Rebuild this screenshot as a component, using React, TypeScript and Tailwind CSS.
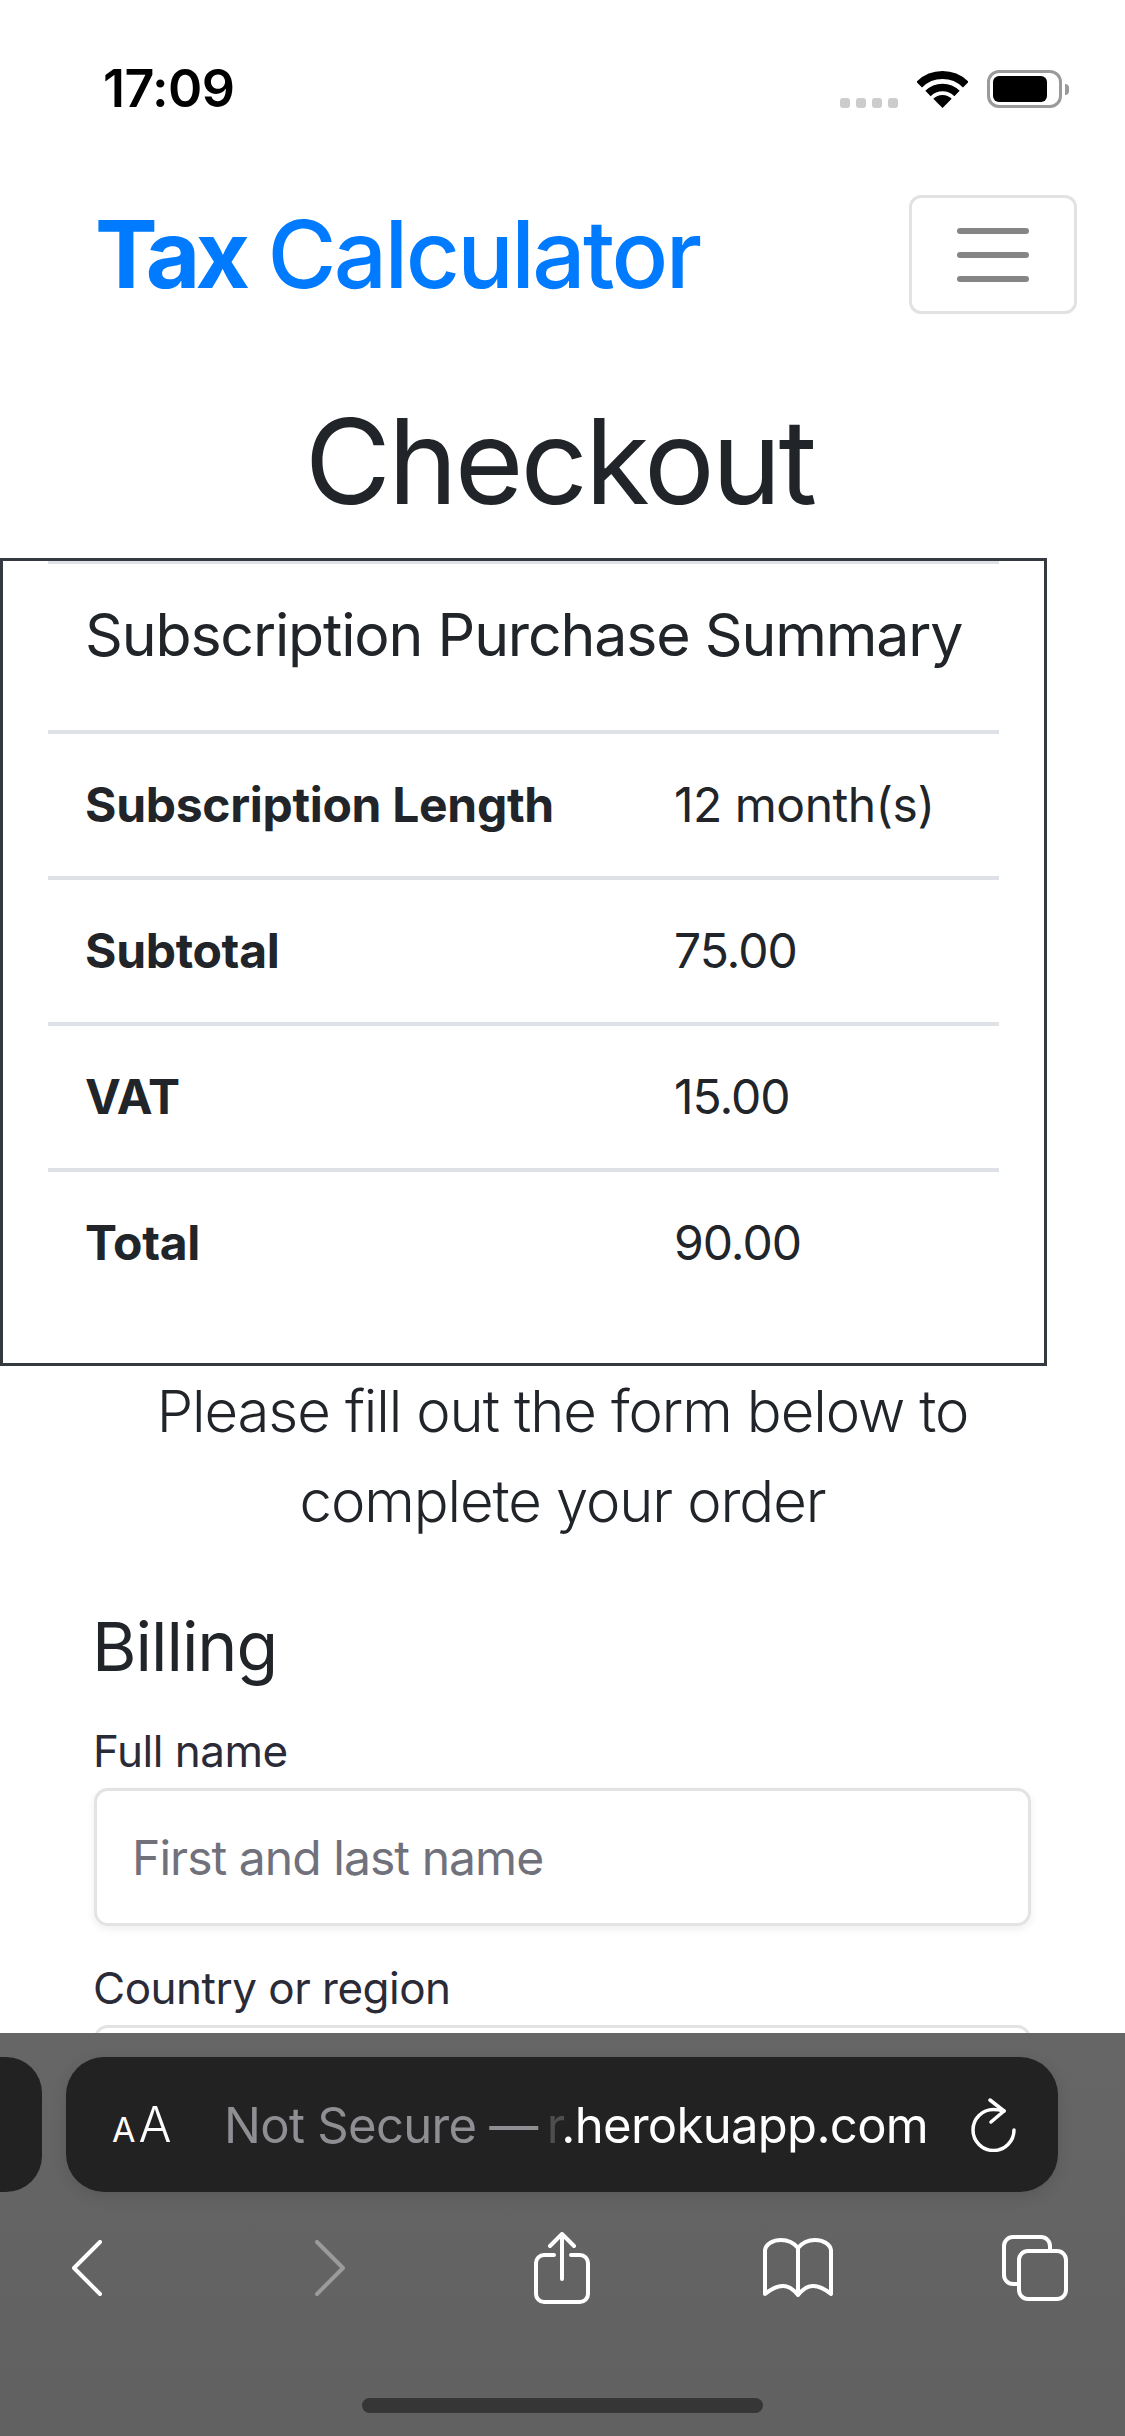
const Wifi = () => (
  <svg width="51" height="37" viewBox="0 0 51 37">
    <path d="M2.2 13.7A33 33 0 0 1 48.8 13.7" fill="none" stroke="#000" strokeWidth="8" />
    <path d="M11 22.5A20.5 20.5 0 0 1 40 22.5" fill="none" stroke="#000" strokeWidth="7.5" />
    <path d="M16.3 27.8A13 13 0 0 1 34.7 27.8L25.5 37Z" fill="#000" />
  </svg>
);

const ShareIcon = () => (
  <svg width="56" height="72" viewBox="0 0 56 72" fill="none" stroke="#fff" strokeWidth="4" strokeLinecap="round" strokeLinejoin="round">
    <path d="M20 23H10a8 8 0 0 0-8 8v31a8 8 0 0 0 8 8h36a8 8 0 0 0 8-8V31a8 8 0 0 0-8-8h-9" />
    <path d="M28 47V2M16 14 28 2 40 14" />
  </svg>
);

const BookIcon = () => (
  <svg width="70" height="60" viewBox="0 0 70 60" fill="none" stroke="#fff" strokeWidth="4" strokeLinejoin="round">
    <path d="M35 10C31 5 25 2 18 2 10 2 3 6 2 12V56C8 51 14 48 20 48 26 48 31 52 35 57 39 52 44 48 50 48 56 48 62 51 68 56V12C67 6 60 2 52 2 45 2 39 5 35 10V57" />
  </svg>
);

const TabsIcon = () => (
  <svg width="66" height="66" viewBox="0 0 66 66" fill="none" stroke="#fff" strokeWidth="4">
    <path d="M15 49H11a9 9 0 0 1-9-9V11a9 9 0 0 1 9-9h28a9 9 0 0 1 9 9v3" />
    <rect x="17" y="16" width="47" height="48" rx="9" />
  </svg>
);

const ReloadIcon = () => (
  <svg width="46" height="54" viewBox="0 0 46 54" fill="none" stroke="#fff" strokeWidth="3.5" strokeLinecap="round" strokeLinejoin="round">
    <path d="M33 13C29 12 26 11.5 22.5 11.5A20.5 20.5 0 1 0 43 32" />
    <path d="M19 2 33 13 20 24" />
  </svg>
);

const Row = ({ label, value, wide }: { label: string; value: string; wide?: boolean }) => (
  <div className="flex h-[146px] items-center border-t-[4px] border-[#dee2e6]">
    <div className="w-[626px] pl-[37px] text-[48px] font-bold tracking-[-0.3px]">{label}</div>
    <div className={wide ? 'text-[48px] tracking-[-0.5px]' : 'text-[48px] tracking-[-1px]'}>{value}</div>
  </div>
);

export default function App() {
  return (
    <div className="flex h-[2436px] w-[1125px] flex-col overflow-hidden bg-white font-['Inter',sans-serif] text-[#212529]">
      <div className="flex-1 overflow-hidden">
        {/* Status bar */}
        <div className="flex h-[178px] items-center justify-between pl-[103px] pr-[56px]">
          <span className="text-[52px] font-semibold tracking-[-0.6px] text-black">17:09</span>
          <div className="flex items-end gap-[19px]">
            <div className="flex gap-[6px]">
              <div className="h-[10px] w-[10px] rounded-[3px] bg-[#cccccc]" />
              <div className="h-[10px] w-[10px] rounded-[3px] bg-[#cccccc]" />
              <div className="h-[10px] w-[10px] rounded-[3px] bg-[#cccccc]" />
              <div className="h-[10px] w-[10px] rounded-[3px] bg-[#cccccc]" />
            </div>
            <Wifi />
            <div className="flex items-center gap-[3px]">
              <div className="h-[38px] w-[75px] rounded-[12px] border-[3px] border-[#9a9a9a] p-[3px] pr-[12px]">
                <div className="h-full w-full rounded-[6px] bg-black" />
              </div>
              <div className="h-[11px] w-[4px] rounded-r-[4px] bg-[#9a9a9a]" />
            </div>
          </div>
        </div>

        {/* Navbar */}
        <nav className="flex h-[153px] items-center justify-between pl-[95px] pr-[48px]">
          <a className="text-[94px] font-medium tracking-[-2.6px] text-[#007bff]">
            <span className="font-bold tracking-[-5px]">Tax</span> Calculator
          </a>
          <button className="flex h-[119px] w-[168px] flex-col items-center justify-center gap-[18px] rounded-[12px] border-[3px] border-[#e2e2e2]">
            <span className="h-[6px] w-[72px] rounded-full bg-[#858585]" />
            <span className="h-[6px] w-[72px] rounded-full bg-[#858585]" />
            <span className="h-[6px] w-[72px] rounded-full bg-[#858585]" />
          </button>
        </nav>

        <h1 className="flex h-[227px] items-center justify-center pr-[6px] pt-[34px] text-[118px] tracking-[-3px]">Checkout</h1>

        {/* Summary table */}
        <div className="h-[808px] w-[1047px] border-[3px] border-[#343a40] pl-[45px] pr-[45px]">
          <div className="flex h-[169px] items-center border-t-[3px] border-[#dee2e6] pb-[24px] pl-[37px] text-[59px] tracking-[-1.16px]">
            Subscription Purchase Summary
          </div>
          <Row label="Subscription Length" value="12 month(s)" wide />
          <Row label="Subtotal" value="75.00" />
          <Row label="VAT" value="15.00" />
          <Row label="Total" value="90.00" />
        </div>

        <p className="text-center text-[58px] font-light leading-[90px] tracking-[-1.1px]">
          Please fill out the form below to
          <br />
          complete your order
        </p>

        {/* Billing form */}
        <div className="mt-[57px] px-[94px]">
          <h4 className="-ml-[2px] text-[68px] leading-[86px] tracking-[-1px]">Billing</h4>
          <label className="-ml-[1px] mb-[1px] mt-[26px] block text-[44px] leading-[72px] tracking-[-0.5px] text-[#2b2b38]">Full name</label>
          <input
            placeholder="First and last name"
            className="h-[138px] w-full rounded-[14px] border-[3px] border-[#e3e3e3] pl-[35px] text-[48px] tracking-[-0.95px] shadow-[0_3px_8px_rgba(0,0,0,0.07)] placeholder:text-[#71717c]"
          />
          <label className="-ml-[1px] mb-[1px] mt-[26px] block text-[44px] leading-[72px] tracking-[-0.5px] text-[#2b2b38]">Country or region</label>
          <input className="h-[138px] w-full rounded-[14px] border-[3px] border-[#e3e3e3]" />
        </div>
      </div>

      {/* Safari toolbar */}
      <div className="h-[403px] bg-linear-to-b from-[#666666] to-[#616161] pt-[24px]">
        <div className="flex h-[135px] gap-[24px]">
          <div className="w-[42px] rounded-r-[36px] bg-[#222222]" />
          <div className="flex w-[992px] items-center rounded-[38px] bg-[#222222] pl-[46px] pr-[41px] shadow-[0_4px_16px_rgba(0,0,0,0.12)]">
            <span className="flex w-[112px] items-baseline text-white">
              <span className="text-[34px]">A</span>
              <span className="ml-[3px] text-[49px] font-light">A</span>
            </span>
            <span className="flex-1 whitespace-nowrap pt-[2px] text-[49px] tracking-[-0.7px] text-white">
              <span className="text-[#8e8e93]">Not Secure —</span>
              <span className="ml-[9px] text-[#4e4e50]">r</span>.herokuapp.com
            </span>
            <ReloadIcon />
          </div>
        </div>
        <div className="mt-[33px] flex h-[86px] items-center pl-[72px]">
          <svg width="30" height="56" viewBox="0 0 30 56" fill="none" stroke="#fff" strokeWidth="4" strokeLinecap="round" strokeLinejoin="round">
            <path d="M28 2 2 28 28 54" />
          </svg>
          <svg className="ml-[213px]" width="30" height="56" viewBox="0 0 30 56" fill="none" stroke="#9b9b9b" strokeWidth="4" strokeLinecap="round" strokeLinejoin="round">
            <path d="M2 2 28 28 2 54" />
          </svg>
          <div className="ml-[189px]">
            <ShareIcon />
          </div>
          <div className="ml-[173px]">
            <BookIcon />
          </div>
          <div className="ml-[169px]">
            <TabsIcon />
          </div>
        </div>
        <div className="mx-auto mt-[87px] h-[15px] w-[401px] rounded-full bg-[#363636]" />
      </div>
    </div>
  );
}
